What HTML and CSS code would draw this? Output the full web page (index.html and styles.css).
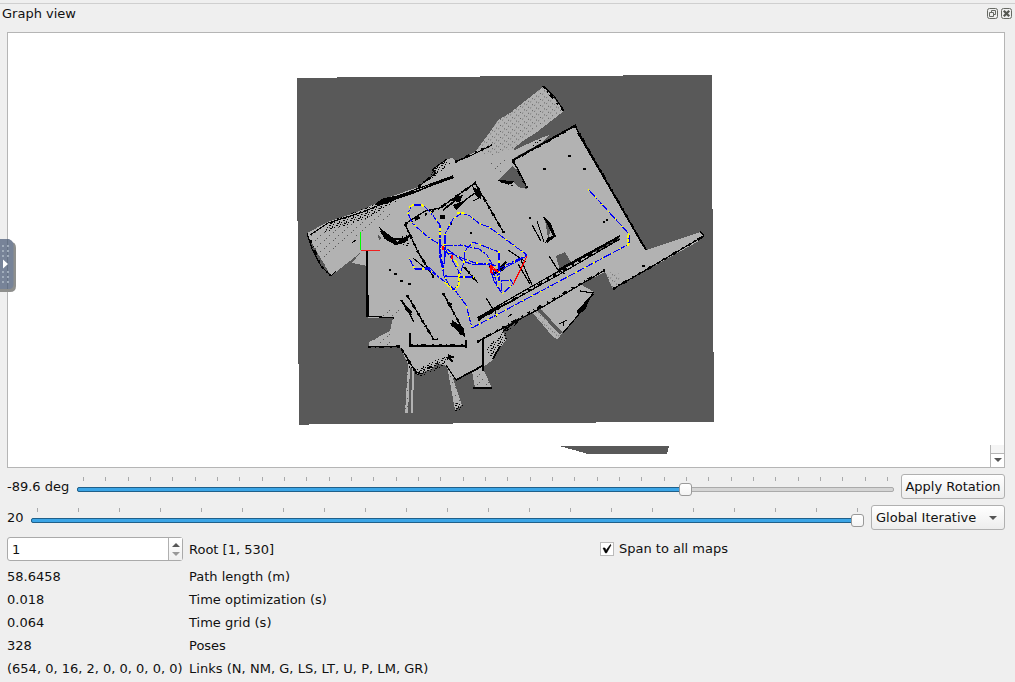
FILE: index.html
```html
<!DOCTYPE html>
<html lang="en">
<head>
<meta charset="utf-8">
<title>Graph view</title>
<link rel="stylesheet" href="styles.css">
</head>
<body>
<main class="dock">
  <header class="titlebar">
    <h1 class="title">Graph view</h1>
    <div class="window-buttons">
      <svg width="11" height="11" viewBox="0 0 11 11" fill="none" stroke="#666963"><rect x=".5" y=".5" width="10" height="10" rx="2"/><path d="M4.5 4V2.5h4v4H7M2.5 4.5h4v4h-4z"/></svg>
      <svg width="11" height="11" viewBox="0 0 11 11" fill="none" stroke="#666963"><rect x=".5" y=".5" width="10" height="10" rx="2"/><path d="M2.800 2.800l5.400 5.400M8.200 2.800L2.800 8.200" stroke="#555852" stroke-width="2.3"/></svg>
    </div>
  </header>

  <section class="canvas">
    <svg class="map" viewBox="8 33 996 434" shape-rendering="crispEdges">
      <defs>
        <pattern id="dots" width="4" height="6" patternUnits="userSpaceOnUse" patternTransform="skewY(-33)"><path d="M0 0h1v1H0zM2 2h1v1H2z" fill="#595959"/></pattern>
        <pattern id="sparse" width="9" height="8" patternUnits="userSpaceOnUse"><path d="M0 0h1v1H0zM5 3h1v1H5zM2 6h1v1H2z" fill="#595959"/></pattern>
        <pattern id="noise" width="7" height="5" patternUnits="userSpaceOnUse"><path d="M0 0h2v1H0zM3 1h1v2H3zM1 3h2v1H1zM5 2h1v1H5zM4 4h1v1H4z" fill="#000"/></pattern>
      </defs>
      <path class="unknown" d="M297 78H337V77H480V76H623V75H712V209H713V352H714V422H596V423H453V424H309V425H299V364H298V221H297z"/>
      <path class="unknown" d="M559 446H669L668 451L667 454H588L574 450z"/>
      <path class="free" d="M307 233L328 222L357 212L377 203L390 197L418 187L437 172L432 170L447 159L453 158L456 162L475 152L490 132L498 120L510 113L544 86L564 111L537 132L520 143L514 150L541 138L575 125L646 250L700 232L704 236L697 242L613 289L605 272L580 284L594 292L580 313L562 333L558 339L554 338L532 312L520 318L503 332L506 340L500 348L493 360L483 367L485 373L492 388H475L472 371L456 379L453 378L462 405L455 410L447 366L437 363L431 369L417 375L414 368L413 413H411L412 368H410L408 413H405L408 364L400 347H369V342L390 331L393 318H368V266L352 263L360 253L331 276L310 240z"/>
      <path class="unknown" d="M498 181L512 166L519 171L527 189L518 187L512 181zM515 150L537 139L529 137L514 148zM514 158L541 143L560 126L574 125L514 160zM556 256L565 252L571 262L560 271zM545 220L551 230L548 238zM594 250L618 236L620 239L596 253zM540 308L562 332L560 335L537 310zM378 235L381 238L379 240zM502 328L519 318L516 324L504 332z"/>
      <path fill="url(#dots)" d="M475 152L498 120L543 87L562 111L530 132L512 149L491 155zM533 312L540 307L562 337L556 340zM605 272L619 273L621 286L613 289z"/>
      <path fill="url(#sparse)" d="M308 234L380 206L392 215L330 252L324 266zM391 308L399 310L393 326zM372 318L397 307L394 318zM368 341L390 331L392 347zM449 370L455 378L463 407L456 410zM404 366L415 365L414 412L405 413zM473 372L485 373L491 388L475 388zM488 163L513 157L501 173z"/>
      <path fill="url(#noise)" d="M328 222L376 204L400 199L368 218L325 232zM378 230L392 240L407 234L410 246L392 244zM401 348L416 370L434 361L448 356L443 367L419 377L410 369zM433 168L448 160L450 164L430 180zM486 348L506 329L507 338L492 359zM454 403L463 403L462 409L455 411zM530 149L541 141L540 137zM497 180L514 184L512 188z"/>
      <g class="wall">
        <path d="M307 233L312 249L321 266L331 276L336 271M310 235L328 223L363 212L414 190L453 176M418 187L436 173L432 170L447 159M455 162L472 155L492 145M543 86L554 96L564 111M512 161L575 126L646 250M513 161L520 173L527 188M700 231L704 236L613 289M367 250V316L394 318M368 347L400 346M410 333V346H466M580 291L593 293L580 313L563 333"/>
        <path d="M405 224L425 211L440 208L475 183L504 233M405 224L418 252L434 278M457 206L475 193M407 295L434 340L438 339M402 300L414 322M443 293L462 328M464 267L478 283"/>
        <path d="M477 318L522 292L619 237M478 320L560 274L620 239M477 342L541 308L605 270M521 260L532 285M486 298L493 309L500 306M473 201L481 197M532 225L541 241M537 221L544 242M549 256L558 270L565 274M483 339V371M473 388H492M446 365L456 380L483 366"/>
        <path d="M401 348L417 374M494 308L497 317M518 264L530 284M508 250L526 262"/>
      </g>
      <path class="wall chips" d="M310 240L321 266L331 276M418 187L436 173M512 161L575 126L646 250M513 161L527 188M613 289L704 236M405 224L418 252L434 278M407 295L434 340M443 293L462 328M478 320L620 238M477 342L605 270M405 224L440 208L475 183L504 233M543 86L564 111M483 339V371M402 350L417 374L438 363M464 267L478 283M410 345H466M368 347H400M455 162L492 145"/>
      <path class="blob" d="M377 202L384 198L395 196L404 193L418 190L435 183L453 175L454 178L432 186L415 193L400 198L386 204L376 205zM379 227L388 234L392 237L397 242L402 239L409 235L406 242L396 245L388 241L384 238zM544 217L551 224L555 234L553 239L545 243L548 237L553 236L547 224zM452 320L464 328L465 338L458 329L451 326zM448 354L455 357L447 360zM405 305L412 311L411 316L405 309zM582 305L588 302L593 292L585 310L578 315L577 310zM503 331L512 328L519 319L517 324L507 331zM472 186L482 193L481 199L476 196zM454 197L463 195L460 202L452 201zM453 205L466 200L456 210zM440 215H445V219H440zM498 180L514 181L512 184L501 183zM489 266L493 264L491 269zM494 274L506 262L504 270z"/>
      <path class="wall thick" d="M513 160L574 126M578 133L646 250M367 254L368 316M381 231L385 238L395 244L410 236M443 210L460 197M544 217L555 236L547 242M401 300L411 315M451 323L462 335M493 275L506 262M478 318L516 299M558 270L620 236M580 309L593 294M448 357L453 362M456 380L482 366M503 331L519 319M390 239L408 239M500 346L493 359M466 340V348"/>
      <path class="wall speck" d="M543 168h2v1h-2zM583 168h2v1h-2zM568 155h2v1h-2zM603 221h1v1h-1zM606 219h1v1h-1zM642 265h2v1h-2zM389 269h1v1h-1zM394 273h2v1h-2zM400 280h2v1h-2zM408 283h2v1h-2zM352 243l4-3M450 303h1v1h-1zM508 317l4-3M559 324l8-4M563 326v-4M529 217h1v1h-1zM450 223h1v1h-1zM470 232h1v1h-1zM413 258l12 10"/>
      <g class="route">
        <path d="M588 189L629 234V244L472 328L466 305L454 289L440 278L428 269L415 269L409 258"/>
        <path d="M425 268H430L441 279M412 223L408 213L412 205L423 205L431 213L440 225V247L444 276L452 290L458 286L459 272L450 256L442 246L428 237L412 223"/>
        <path d="M445 245V234L453 219L462 213L470 216L480 224L489 227L527 255L500 268L492 264L475 263L447 252L443 244"/>
        <path d="M443 246L461 245L479 249L487 255L495 269L500 281M464 262L465 251L473 242L499 252V282M447 249L463 261L471 264L490 265M464 262L459 277H474M445 276L474 277M492 266L497 285L502 294L513 284L511 280L502 281L501 291"/>
        <path d="M440 225V258L444 275M445 235V257L443 270M491 271L494 281L499 289M527 256L506 267L499 272"/>
      </g>
      <g class="route-nodes">
        <path d="M588 189L629 234V244L472 328L466 305L454 289L440 278L428 269L415 269L409 258"/>
        <path d="M412 223L408 213L412 205L423 205L431 213L440 225V247L444 276L452 290L458 286L459 272L450 256L442 246L428 237L412 223"/>
        <path d="M445 245V234L453 219L462 213L470 216L480 224L489 227L527 255L500 268L492 264L475 263L447 252L443 244"/>
        <path d="M443 246L461 245L479 249L487 255L495 269L500 281M464 262L465 251L473 242L499 252V282M464 262L459 277H474M492 266L497 285L502 294L513 284L511 280L502 281"/>
      </g>
      <path class="nodes" d="M628 235V247M440 228V235M459 274V286L455 289M457 213H464M409 207L414 205M421 205L424 207M455 260L459 267M444 282L453 290M502 294L505 291"/>
      <path class="loop" d="M527 256L513 285M490 265L499 272L490 268L493 274M491 265V273M443 246V250M452 255V259"/>
      <path class="axis-x" d="M361 250.5H380"/>
      <path class="axis-y" d="M360.500 232V250"/>
    </svg>
    <div class="scroll-end"><span class="arrow down"></span></div>
  </section>

  <section class="controls">
    <div class="slider-row">
      <span class="value rotation-value">-89.6 deg</span>
      <div class="slider">
        <svg class="ticks" shape-rendering="crispEdges"><path d="M6 2H817" stroke="#a9aaab" stroke-width="4" stroke-dasharray="1 21.33"/></svg>
        <div class="groove"><div class="fill" style="width:608px"></div></div>
        <div class="handle" style="left:602px"></div>
      </div>
      <button class="button rotate">Apply Rotation</button>
    </div>
    <div class="slider-row">
      <span class="value iteration-value">20</span>
      <div class="slider">
        <svg class="ticks" shape-rendering="crispEdges"><path d="M6 2H833" stroke="#a9aaab" stroke-width="4" stroke-dasharray="1 40"/></svg>
        <div class="groove"><div class="fill" style="width:825px"></div></div>
        <div class="handle" style="left:820px"></div>
      </div>
      <button class="button mode">Global Iterative<span class="arrow down"></span></button>
    </div>
  </section>

  <section class="root-row">
    <div class="spin"><span class="spin-value">1</span><span class="spin-buttons"><i class="arrow up"></i><i class="arrow down faded"></i></span></div>
    <span class="root-label">Root [1, 530]</span>
    <label class="span-maps"><span class="check"><svg width="14" height="14" viewBox="0 0 14 14"><path d="M3 6L5 6L6 8.5L10.5 2.5L11 3L6.5 11H5.5z" fill="#000" stroke="#000" stroke-width=".6"/></svg></span>Span to all maps</label>
  </section>

  <dl class="stats">
    <dt>58.6458</dt><dd>Path length (m)</dd>
    <dt>0.018</dt><dd>Time optimization (s)</dd>
    <dt>0.064</dt><dd>Time grid (s)</dd>
    <dt>328</dt><dd>Poses</dd>
    <dt>(654, 0, 16, 2, 0, 0, 0, 0, 0)</dt><dd class="links">Links (N, NM, G, LS, LT, U, P, LM, GR)</dd>
  </dl>
</main>
<div class="side-tab"><svg width="16" height="54" viewBox="0 0 16 54"><path d="M0 3H11Q16 3 16 9V47Q16 53 10 53H0z" fill="#8e8f8d"/><path d="M0 0H9Q13.500 2 13.500 6V45Q13.500 50 9 50H0z" fill="#778398"/><path d="M7.500 0V50" stroke="#667386"/><path d="M3 20.500L8 25L3 29.500z" fill="#fff"/><g stroke="#a1adbb" stroke-width="2" stroke-dasharray="2 3"><path d="M2 7H12M2 12H12M2 17H12M2 33H12M2 38H12M2 43H12"/></g></svg></div>
</body>
</html>
```
FILE: styles.css
```css
* { box-sizing: border-box; }
body {
  margin: 0;
  width: 1015px;
  height: 682px;
  overflow: hidden;
  background: #efefef;
  color: #111;
  font: 13px/16px "DejaVu Sans", sans-serif;
}
.dock { display: flex; flex-direction: column; height: 682px; }
.titlebar {
  display: flex;
  justify-content: space-between;
  height: 32px;
  padding: 5px 3px 0 2px;
  background: linear-gradient(#efefef 3px, #cfcfcf 3px, #cfcfcf 4px, #efefef 4px);
}
.title { margin: 0; font-size: 13px; font-weight: 400; line-height: 17px; }
.window-buttons { display: flex; gap: 3px; padding-top: 3px; }
.canvas {
  position: relative;
  width: 998px;
  height: 436px;
  margin-left: 7px;
  border: 1px solid #b5b5b5;
  background: #fff;
}
.map { display: block; width: 996px; height: 434px; }
.unknown { fill: #595959; }
.free { fill: #b2b2b2; }
.wall { fill: none; stroke: #000; stroke-width: 1.2; }
.thick { stroke-width: 1.7; }
.chips { stroke-width: 2.4; stroke-dasharray: 3 4 1 3 5 6 2 5; }
.blob { fill: #000; }
.speck { stroke-width: 1; }
.route { fill: none; stroke: #0000f5; stroke-width: 1.1; stroke-dasharray: 14 1; }
.route-nodes { fill: none; stroke: #ff0; stroke-width: 1.3; stroke-dasharray: 1.5 8.5; }
.nodes { fill: none; stroke: #ff0; stroke-width: 1.4; stroke-dasharray: 3 1; }
.loop { fill: none; stroke: #f00; stroke-width: 1.2; }
.axis-x { stroke: #f02020; }
.axis-y { stroke: #0f0; }
.scroll-end {
  position: absolute;
  right: 0;
  bottom: 0;
  display: flex;
  align-items: center;
  justify-content: center;
  width: 14px;
  height: 22px;
  padding-top: 7px;
  border-left: 1px solid #b5b5b5;
  background: linear-gradient(#f5f5f5 8px, #b5b5b5 8px, #b5b5b5 9px, #fff 9px);
}
.arrow { display: block; width: 0; height: 0; border: 4px solid transparent; }
.down { border-top-color: #555; border-bottom: 0; }
.up { border-bottom-color: #555; border-top: 0; }
.faded { border-top-color: #999; }
.controls { display: flex; flex-direction: column; gap: 6px; padding: 6px 10px 0 7px; }
.slider-row { display: flex; height: 25px; align-items: center; }
.value { flex: none; white-space: nowrap; }
.rotation-value { width: 70px; }
.iteration-value { width: 24px; }
.slider { position: relative; flex: 1; height: 25px; padding-top: 3px; }
.ticks { display: block; width: 100%; height: 4px; }
.groove { height: 5px; margin-top: 6px; border: 1px solid #aaa; border-radius: 2px; background: #d5d5d5; }
.fill { height: 5px; margin: -1px; border: 1px solid #20608a; border-radius: 2px; background: #3ba5e6; }
.handle { position: absolute; top: 9px; width: 13px; height: 13px; border: 1px solid #999; border-radius: 3px; background: linear-gradient(#fff, #f4f4f4); }
.button {
  flex: none;
  display: flex;
  align-items: center;
  justify-content: center;
  height: 25px;
  margin: 0 0 0 7px;
  padding: 0;
  border: 1px solid #b0b0b0;
  border-radius: 3px;
  background: linear-gradient(#fff, #ededed);
  color: #111;
  font: inherit;
}
.rotate { width: 104px; }
.mode { width: 134px; justify-content: space-between; padding: 0 7px 0 4px; }
.root-row { display: flex; align-items: center; height: 24px; margin-top: 7px; padding-left: 7px; }
.spin { display: flex; width: 176px; height: 24px; border: 1px solid #aaa; border-radius: 3px; background: #fff; }
.spin-value { flex: 1; padding: 4px; }
.spin-buttons { display: flex; flex-direction: column; align-items: center; justify-content: center; gap: 5px; width: 14px; border-left: 1px solid #b0b0b0; background: linear-gradient(#fff, #f0f0f0); }
.root-label { width: 417px; padding: 2px 0 0 6px; }
.span-maps { display: flex; align-items: center; gap: 5px; margin-top: -1px; }
.check { display: flex; width: 14px; height: 14px; outline: 1px solid #bbb; outline-offset: -1px; background: #fff; }
.stats { display: grid; grid-template-columns: 176px 1fr; grid-auto-rows: 23px; column-gap: 6px; margin: 4px 0 0 7px; line-height: 23px; white-space: nowrap; }
.stats dt, .stats dd { margin: 0; }
.links { letter-spacing: .03px; }
.side-tab { position: absolute; left: 0; top: 239px; width: 16px; height: 54px; }
```
